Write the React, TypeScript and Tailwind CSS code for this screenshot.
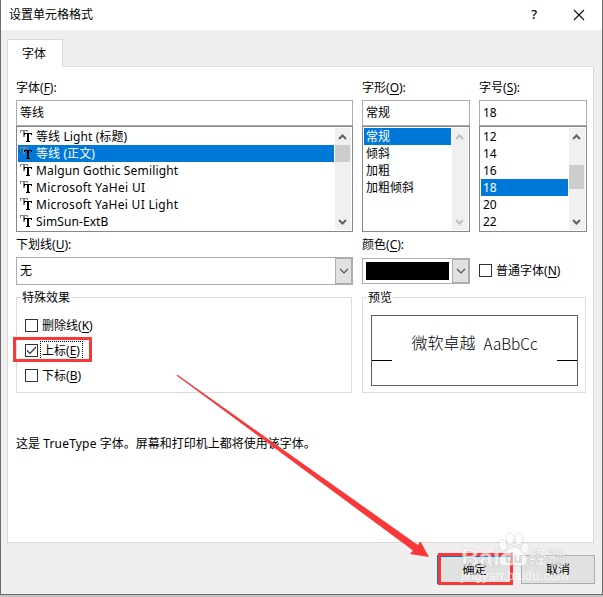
import React from 'react';

const fonts = [
  { name: '等线 Light (标题)', spacing: 'tracking-[0.1px]' },
  { name: '等线 (正文)', spacing: 'tracking-[0.1px]' },
  { name: 'Malgun Gothic Semilight', spacing: 'tracking-[0.15px]' },
  { name: 'Microsoft YaHei UI', spacing: 'tracking-[0.3px]' },
  { name: 'Microsoft YaHei UI Light', spacing: 'tracking-[0.28px]' },
  { name: 'SimSun-ExtB', spacing: 'tracking-[0.1px]' },
];
const styles = [{ name: '常规' }, { name: '倾斜' }, { name: '加粗' }, { name: '加粗倾斜' }];
const sizes = [{ name: '12' }, { name: '14' }, { name: '16' }, { name: '18' }, { name: '20' }, { name: '22' }];

const Label: React.FC<{ text: string; hotkey: string; colon?: boolean }> = ({ text, hotkey, colon }) => (
  <span className="whitespace-nowrap">
    {text}(<span className="underline underline-offset-2">{hotkey}</span>){colon && ':'}
  </span>
);

const Chevron: React.FC<{ up?: boolean; color: string }> = ({ up, color }) => (
  <svg width="15" height="17" viewBox="0 0 15 17" fill="none" stroke={color} strokeWidth="2">
    <path d={up ? 'M4 11 L7.5 7.5 L11 11' : 'M4 7 L7.5 10.5 L11 7'} />
  </svg>
);

const TrueTypeIcon = () => (
  <svg width="14" height="15" viewBox="0 0 14 15" shapeRendering="crispEdges">
    <path d="M0 1h8v2h-1v-1h-2v6h-2v-6h-2v2h-1Z" fill="#858585" />
    <path d="M4 4h8v2h-1v-1h-2v7h1v1h-4v-1h1v-7h-2v1h-1Z" fill="#000" />
  </svg>
);

const ListBox: React.FC<{
  items: { name: string; spacing?: string }[];
  selected: number;
  icons?: boolean;
  disabled?: boolean;
  children?: React.ReactNode;
}> = ({ items, selected, icons, disabled, children }) => (
  <div className="flex h-[106px] gap-px border border-[#828790] p-px">
    <div className="flex-1">
      {items.map((item, i) => (
        <div
          key={item.name}
          className={`flex h-[17px] items-center whitespace-nowrap pl-[2px] ${
            i === selected ? 'bg-[#0078d7] text-white' : ''
          }`}
        >
          {icons && (
            <span className="mr-[2px] shrink-0">
              <TrueTypeIcon />
            </span>
          )}
          <span className={item.spacing}>{item.name}</span>
        </div>
      ))}
    </div>
    <div className="flex w-4 flex-col justify-between bg-[#f0f0f0]">
      <Chevron up color={disabled ? '#bfbfbf' : '#606060'} />
      {children}
      <Chevron color={disabled ? '#bfbfbf' : '#606060'} />
    </div>
  </div>
);

const Field: React.FC<{ value: string }> = ({ value }) => (
  <div className="flex h-[26px] items-center border border-[#abadb3] pb-[2px] pl-[3px]">{value}</div>
);

const DropButton = () => (
  <div className="flex w-[18px] items-center justify-center border border-r-2 border-[#adadad] bg-[#e1e1e1]">
    <svg width="10" height="6" viewBox="0 0 10 6" fill="none" stroke="#505050" strokeWidth="1.2">
      <path d="M1 1 L5 5 L9 1" />
    </svg>
  </div>
);

const CheckBox: React.FC<{ checked?: boolean }> = ({ checked }) => (
  <span className="flex h-[13px] w-[13px] shrink-0 items-center justify-center border border-[#333] bg-white">
    {checked && (
      <svg width="11" height="11" viewBox="0 0 11 11" fill="none" stroke="#333" strokeWidth="1.2">
        <path d="M1 5.5 L4 8.5 L10 2" />
      </svg>
    )}
  </span>
);

const Watermark = () => (
  <svg className="absolute left-[458px] top-[526px] opacity-70" width="120" height="62" viewBox="0 0 120 62">
    <g fill="#fff" stroke="#c8c8c8" strokeWidth="0.6">
      <text x="3" y="40" fontSize="24" fontWeight="700" fontFamily="Liberation Sans" textLength="39" lengthAdjust="spacingAndGlyphs">Bai</text>
      <text x="71" y="38" fontSize="18" fontWeight="700" fontFamily="Noto Sans CJK SC" textLength="37">经验</text>
      <ellipse cx="45" cy="19" rx="4" ry="5.5" transform="rotate(-15 45 19)" />
      <ellipse cx="52" cy="12.5" rx="4" ry="5.8" />
      <ellipse cx="61" cy="13" rx="4" ry="5.8" transform="rotate(12 61 13)" />
      <ellipse cx="67" cy="22" rx="4" ry="5.5" transform="rotate(20 67 22)" />
      <path d="M56 21c5 0 7 4 10 7 5 4 4 12-3 12-3 0-5-1-8-1s-5 1-8 1c-7 0-7-8-2-12 4-3 6-7 11-7Z" />
    </g>
    <text x="47" y="37" fontSize="14" fontWeight="700" fontFamily="Liberation Sans" fill="#d0d0d0">du</text>
    <text x="3" y="54" fontSize="12.5" fontFamily="Liberation Sans" fill="#fff" textLength="107">jingyan.baidu.com</text>
  </svg>
);

export default function App() {
  return (
    <div className="relative h-[597px] w-[603px] overflow-hidden bg-[#c3c3c3] font-['Noto_Sans','Noto_Sans_CJK_SC',sans-serif] text-[12px] leading-[17px] text-black">
      <div className="flex h-[595px] flex-col border-x border-b border-[#6b6b6b] bg-[#efefef]">
        <header className="flex h-[30px] shrink-0 items-center bg-white pl-2">
          <span className="flex-1 pb-px">设置单元格格式</span>
          <span className="mr-[36px] pb-px text-[13px] font-medium">?</span>
          <svg className="mr-[17px]" width="12" height="12" viewBox="0 0 12 12" stroke="#111" strokeWidth="1.1">
            <path d="M1 1 L11 11 M11 1 L1 11" />
          </svg>
        </header>

        <div className="z-10 ml-[6px] mt-[9px] flex h-7 w-14 shrink-0 items-center justify-center border border-b-0 border-[#d9d9d9] bg-white pr-[2px]">
          字体
        </div>
        <main className="-mt-px ml-[6px] h-[477px] w-[587px] shrink-0 border border-[#d9d9d9] bg-white pl-2 pt-3">
          <div className="grid grid-cols-[337px_108px_108px] gap-x-[9px]">
            <div>
              <div className="h-[21px]"><Label text="字体" hotkey="F" colon /></div>
              <Field value="等线" />
              <ListBox items={fonts} selected={1} icons>
                <div className="mb-auto h-[17px] w-[15px] bg-[#cdcdcd]" />
              </ListBox>
            </div>
            <div>
              <div className="h-[21px]"><Label text="字形" hotkey="O" colon /></div>
              <Field value="常规" />
              <ListBox items={styles} selected={0} disabled />
            </div>
            <div>
              <div className="h-[21px]"><Label text="字号" hotkey="S" colon /></div>
              <Field value="18" />
              <ListBox items={sizes} selected={3}>
                <div className="mb-auto mt-5 h-6 w-[15px] bg-[#cdcdcd]" />
              </ListBox>
            </div>
          </div>

          <div className="mt-1 grid grid-cols-[337px_108px_108px] gap-x-[9px]">
            <div>
              <div className="h-[21px]"><Label text="下划线" hotkey="U" colon /></div>
              <div className="flex h-7 justify-between border border-r-0 border-[#abadb3]">
                <span className="self-center pb-px pl-[3px]">无</span>
                <DropButton />
              </div>
            </div>
            <div>
              <div className="h-[22px]"><Label text="颜色" hotkey="C" colon /></div>
              <div className="flex h-[26px] justify-between border border-r-0 border-[#abadb3]">
                <div className="ml-[3px] mt-[3px] h-[18px] w-[83px] bg-black" />
                <DropButton />
              </div>
            </div>
            <div className="flex items-center gap-1 pt-[20px]">
              <CheckBox />
              <Label text="普通字体" hotkey="N" />
            </div>
          </div>

          <div className="mt-3 flex gap-[10px]">
            <section className="h-24 w-[336px] shrink-0 border border-[#dcdcdc]">
              <div className="-mt-[9px] ml-1 h-[17px] w-[50px] bg-white pl-px">特殊效果</div>
              <div className="ml-2 mt-[11px] flex flex-col gap-2">
                <div className="flex h-[17px] items-center gap-1"><CheckBox /><Label text="删除线" hotkey="K" /></div>
                <div className="flex h-[17px] items-center gap-[2px]">
                  <CheckBox checked />
                  <div className="flex h-[19px] w-[43px] items-center border border-dotted border-black pl-px">
                    <Label text="上标" hotkey="E" />
                  </div>
                </div>
                <div className="flex h-[17px] items-center gap-1"><CheckBox /><Label text="下标" hotkey="B" /></div>
              </div>
            </section>
            <section className="h-24 w-56 shrink-0 border border-[#dcdcdc]">
              <div className="-mt-[9px] ml-1 h-[17px] w-[26px] bg-white pl-px">预览</div>
              <div className="ml-2 mt-[9px] flex h-[71px] w-[207px] justify-between border border-[#606060]">
                <div className="mt-11 h-px w-5 bg-black" />
                <div className="mt-[19px] flex gap-2 whitespace-nowrap text-[16px] font-light">
                  <span>微软卓越</span>
                  <span className="font-['Noto_Sans_CJK_SC',sans-serif] text-[15.3px]">AaBbCc</span>
                </div>
                <div className="mt-11 h-px w-5 bg-black" />
              </div>
            </section>
          </div>

          <p className="mt-[42px] whitespace-nowrap">
            这是 <span className="tracking-[0.2px]">TrueType</span> 字体。屏幕和打印机上都将使用该字体。
          </p>
        </main>

        <footer className="mr-[7px] mt-3 flex justify-end gap-[9px]">
          <button className="h-[29px] w-[75px] border-2 border-[#0078d7] bg-[#e1e1e1]">确定</button>
          <button className="h-[29px] w-[74px] border border-[#adadad] bg-[#e1e1e1]">取消</button>
        </footer>
      </div>

      <div className="absolute left-[13px] top-[337px] h-[25px] w-[79px] border-3 border-[#fa3838]" />
      <div className="absolute left-[438px] top-[553px] h-8 w-[75px] border-3 border-[#fa3838]" />
      <svg className="absolute left-[170px] top-[370px]" width="265" height="192" viewBox="170 370 265 192">
        <path d="M176.5 375.5 L177.5 374.8 L417.8 545 L420.5 541.5 L429 557 L410 554 L413 550.5 Z" fill="#fa3838" />
      </svg>
      <Watermark />
    </div>
  );
}
